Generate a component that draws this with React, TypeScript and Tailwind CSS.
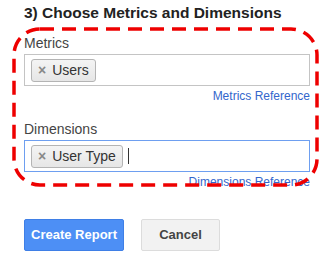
import React from 'react';

function Chip({ label }: { label: string }) {
  return (
    <span className="flex items-center h-[23px] pl-[6px] pr-[6px] rounded-[3px] border border-[#b4b4b4] bg-gradient-to-b from-[#f4f4f4] to-[#e6e6e6] text-[14px] text-[#333]">
      <span className="text-[14px] font-bold text-[#888] mr-[6px] leading-none">×</span>
      {label}
    </span>
  );
}

function App() {
  return (
    <div className="relative w-[336px] h-[270px] bg-white overflow-hidden" style={{ fontFamily: '"Liberation Sans", Arial, sans-serif' }}>
      <div className="pl-[24px] w-[310px] pt-[3px]">
        <h2 className="text-[15.5px] font-bold text-[#222] leading-[19px]">3) Choose Metrics and Dimensions</h2>

        <div className="mt-[13px] text-[14px] text-[#444] leading-[17px]">Metrics</div>
        <div className="mt-[2px] h-[32px] border border-[#c4c4c4] flex items-center px-[6px] gap-[6px]">
          <Chip label="Users" />
        </div>
        <div className="text-right text-[12px] text-[#3366cc] leading-[15px] mt-[3px]">Metrics Reference</div>

        <div className="mt-[17px] text-[14px] text-[#444] leading-[17px]">Dimensions</div>
        <div className="mt-[2px] h-[32px] border border-[#6e9ff0] flex items-center px-[6px] gap-[5px]">
          <Chip label="User Type" />
          <span className="w-px h-[16px] bg-[#333]" />
        </div>
        <div className="text-right text-[12px] text-[#3366cc] leading-[15px] mt-[3px]">Dimensions Reference</div>

        <div className="mt-[29px] flex gap-[17px]">
          <button className="h-[32px] w-[100px] rounded-[2px] bg-[#4d8ff5] border border-[#3f7fe6] text-white text-[13px] font-bold">
            Create Report
          </button>
          <button className="h-[32px] w-[79px] rounded-[2px] bg-[#f2f2f2] border border-[#dcdcdc] text-[#444] text-[13px] font-bold">
            Cancel
          </button>
        </div>
      </div>

      <svg className="absolute left-0 top-0 pointer-events-none" width="336" height="270">
        <rect x="14" y="29" width="303" height="156" rx="26" ry="26" fill="none" stroke="#ee0000" strokeWidth="3.5" strokeDasharray="14 8" />
      </svg>
    </div>
  );
}

export default App;
